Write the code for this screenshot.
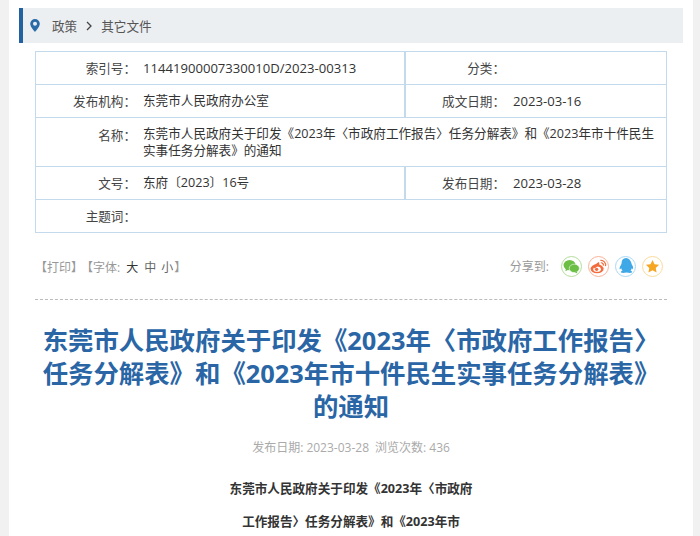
<template>
  <div class="page">
    <div class="main">
      <div class="crumb">
        <svg class="pin" width="10" height="13" viewBox="0 0 10 13"><path fill="#2a6ba8" fill-rule="evenodd" d="M5 0a4.800 4.800 0 0 0-4.800 4.800C.2 8 5 13 5 13s4.800-5 4.800-8.200A4.800 4.800 0 0 0 5 0Zm0 6.800a2 2 0 1 1 0-4 2 2 0 0 1 0 4Z"/></svg>
        <span>政策</span>
        <svg class="chev" width="6" height="10" viewBox="0 0 6 10"><path d="M1 1l4 4-4 4" fill="none" stroke="#444" stroke-width="1.300"/></svg>
        <span>其它文件</span>
      </div>
      <div class="meta">
        <div class="row two">
          <div class="cell"><span class="k">索引号：</span><span class="v num">11441900007330010D/2023-00313</span></div>
          <div class="cell r"><span class="k kr">分类：</span><span class="v"></span></div>
        </div>
        <div class="row two">
          <div class="cell"><span class="k">发布机构：</span><span class="v">东莞市人民政府办公室</span></div>
          <div class="cell r"><span class="k kr">成文日期：</span><span class="v num">2023-03-16</span></div>
        </div>
        <div class="row tall">
          <div class="cell"><span class="k">名称：</span><span class="v">东莞市人民政府关于印发《2023年〈市政府工作报告〉任务分解表》和《2023年市十件民生实事任务分解表》的通知</span></div>
        </div>
        <div class="row two">
          <div class="cell"><span class="k">文号：</span><span class="v">东府〔2023〕16号</span></div>
          <div class="cell r"><span class="k kr">发布日期：</span><span class="v num">2023-03-28</span></div>
        </div>
        <div class="row">
          <div class="cell"><span class="k">主题词：</span></div>
        </div>
      </div>
      <div class="tools">
        <div class="left"><span>【打印】</span><span class="fontset">【字体:<b>大</b><i>中</i><i>小</i>】</span></div>
        <div class="share">
          <span class="share-label">分享到:</span>
          <span class="ic wx"><svg width="17" height="15" viewBox="0 0 18 16"><ellipse cx="7" cy="6.500" rx="6.500" ry="5.500" fill="#6cbf45"/><path d="M3 10.500 2.500 13l3-1.500Z" fill="#6cbf45"/><ellipse cx="12" cy="10" rx="5.400" ry="4.500" fill="#6cbf45" stroke="#fff" stroke-width=".6"/><path d="M14.500 13.500 15.500 15.500 12.500 14.200Z" fill="#6cbf45"/></svg></span>
          <span class="ic wb"><svg width="17" height="15" viewBox="0 0 18 16"><ellipse cx="7.500" cy="10.500" rx="7" ry="4.800" fill="#f26c3d"/><ellipse cx="7.500" cy="10.800" rx="4" ry="2.900" fill="#fff"/><circle cx="7" cy="11" r="1.800" fill="#f26c3d"/><path d="M3 8 8 4c1-.8 2-.6 1.800 1L9.500 6.500 5 10Z" fill="#f26c3d"/><path d="M11 1.500a5 5 0 0 1 5.500 6M11.500 4a2.500 2.500 0 0 1 2.700 3" fill="none" stroke="#f26c3d" stroke-width="1.300"/></svg></span>
          <span class="ic qq"><svg width="14" height="16" viewBox="0 0 14 16"><path fill="#3fa9e8" d="M7 0C4 0 2.600 2.200 2.600 5c0 .8-.2 1.200-.7 2-.9 1.500-1.600 3.200-1.200 4.300.3.500.9-.3 1.400-1.200.2 1 .7 1.900 1.400 2.500-1 .4-1.700 1-1.500 1.700.3.800 2.800.8 5.500.2 2.700.6 5.200.6 5.500-.2.200-.7-.5-1.300-1.500-1.700.7-.6 1.200-1.500 1.400-2.500.5.900 1.100 1.700 1.400 1.200.4-1.100-.3-2.800-1.200-4.300-.5-.8-.7-1.200-.7-2C11.400 2.200 10 0 7 0Z"/></svg></span>
          <span class="ic st"><svg width="15" height="15" viewBox="0 0 24 24"><path fill="#f5a623" d="M12 1.500l3.200 6.700 7.300 1-5.300 5.100 1.300 7.300L12 18.100l-6.500 3.500 1.300-7.300-5.300-5.100 7.300-1Z"/></svg></span>
        </div>
      </div>
      <div class="dash"></div>
      <h1 class="title">东莞市人民政府关于印发《2023年〈市政府工作报告〉任务分解表》和《2023年市十件民生实事任务分解表》的通知</h1>
      <div class="info"><span>发布日期: 2023-03-28</span><span>浏览次数: 436</span></div>
      <div class="body">
        <p>东莞市人民政府关于印发《2023年〈市政府</p>
        <p>工作报告〉任务分解表》和《2023年市</p>
      </div>
    </div>
  </div>
</template>
<style scoped>
.page{width:700px;height:536px;overflow:hidden;background:#f1f1f1;font-family:"Open Sans","Noto Sans CJK SC",sans-serif;}
.main{margin-left:9px;width:684px;height:536px;overflow:hidden;background:#fff;padding:8px 10px 0;box-sizing:border-box;}
.crumb{height:35px;background:#eceff2;border-left:4px solid #22639f;display:flex;align-items:center;font-size:12.600px;color:#555;box-sizing:border-box;padding-left:7px;width:664px;}
.pin{margin-right:12px}
.chev{margin:0 9px 0 9px}
.meta{margin:8px 0 0 16px;border:1px solid #c3d9ec;width:632px;box-sizing:border-box;}
.row{display:flex;height:33px;border-bottom:1px solid #c3d9ec;box-sizing:border-box;font-size:12.600px;color:#333}
.row:last-child{border-bottom:none;height:32px}
.row.tall{height:49px}
.cell{display:flex;align-items:center;flex:1;min-width:0;}
.two .cell{padding-bottom:1px;box-sizing:border-box}
.two .cell:first-child{flex:0 0 368px;}
.cell.r{border-left:2px solid #c3d9ec;}
.row:last-child .cell{padding-bottom:2px}
.tall .cell{align-items:flex-start;padding-top:7px;box-sizing:border-box}
.k{flex:0 0 100px;text-align:right;color:#444;}
.kr{flex:0 0 99px}
.v{margin-left:7px;line-height:17px;}
.kr + .v{margin-left:8px}
.num{font-size:13.100px;margin-top:2px;}
.tall .v{flex:1;margin-right:8px}
.tools{display:flex;justify-content:space-between;align-items:center;margin:18px 0 0 16px;width:628px;height:30px;font-size:12px;color:#999}
.left{padding-top:1px}
.fontset{margin-left:4px}
.left b{font-weight:400;color:#333;margin:0 6px 0 6px}
.left i{font-style:normal;margin:0 5px 0 0;color:#666}
.left i:last-child{margin-right:1px}
.share{display:flex;align-items:center;gap:6px;}
.share-label{margin-right:6px;color:#999}
.ic{width:21px;height:21px;border:1.500px solid;border-radius:50%;display:flex;align-items:center;justify-content:center;box-sizing:border-box}
.wx{border-color:#b4dd9b}.wb{border-color:#fab297}.qq{border-color:#a8d8f5}.st{border-color:#fcdb9b}
.dash{margin:18px 0 0 16px;width:632px;border-top:1px dashed #bbb;}
.title{margin:23.500px 0 0 16px;width:632px;font-size:25.400px;line-height:33px;font-weight:700;color:#2a66a5;text-align:center;}
.info{margin-top:15px;margin-left:16px;width:632px;text-align:center;font-size:12px;color:#aaa;display:flex;justify-content:center;gap:6px}
.body{margin-left:16px;width:632px;font-size:12.600px;font-weight:700;color:#333;text-align:center;margin-top:24px;}
.body p{margin:0 0 16px;line-height:17px}
</style>
